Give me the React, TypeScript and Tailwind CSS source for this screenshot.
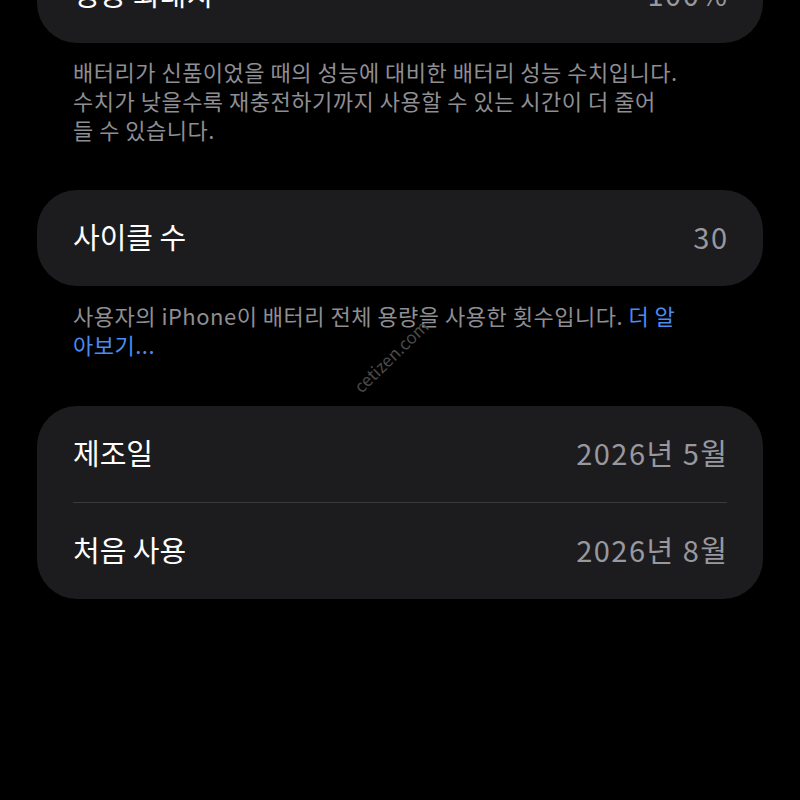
import React from "react";

const font = { fontFamily: '"Noto Sans CJK KR", "Noto Sans", sans-serif' };

function Row({ label, value }: { label: string; value: string }) {
  return (
    <div className="flex h-[96px] items-center justify-between pb-[3px]">
      <span className="text-[29px] text-white">{label}</span>
      <span className="text-[29px] text-[#98989e] tracking-[1.5px] mr-[-1.5px]">{value}</span>
    </div>
  );
}

export default function App() {
  return (
    <div
      className="relative h-[800px] w-[800px] overflow-hidden bg-black [font-family:'Noto_Sans_CJK_KR','Noto_Sans',sans-serif]"
    >
      <div className="px-[37px]">
        <div className="mt-[-53px] rounded-[40px] bg-[#1c1c1e] px-[36px]">
          <Row label="성능 최대치" value="100%" />
        </div>
        <p className="mt-[14px] px-[36px] text-[22px] leading-[29px] text-[#8e8e93] tracking-[0.5px]">
          배터리가 신품이었을 때의 성능에 대비한 배터리 성능 수치입니다.
          <br />
          수치가 낮을수록 재충전하기까지 사용할 수 있는 시간이 더 줄어
          <br />
          들 수 있습니다.
        </p>
        <div className="mt-[46px] rounded-[40px] bg-[#1c1c1e] px-[36px]">
          <Row label="사이클 수" value="30" />
        </div>
        <p className="mt-[15px] px-[36px] text-[22px] leading-[29px] text-[#8e8e93] tracking-[0.5px]">
          사용자의 iPhone이 배터리 전체 용량을 사용한 횟수입니다.{" "}
          <span className="text-[#4a8cf2]">더 알</span>
          <br />
          <span className="text-[#4a8cf2]">아보기...</span>
        </p>
        <div className="mt-[47px] rounded-[40px] bg-[#1c1c1e] px-[36px]">
          <Row label="제조일" value="2026년 5월" />
          <div className="h-px bg-[#3a3a3c]" />
          <Row label="처음 사용" value="2026년 8월" />
        </div>
      </div>
      <div
        className="absolute left-[343px] top-[343px] -rotate-[44deg] text-[17px] text-[#4a4a4a]"
        style={font}
      >
        cetizen.com
      </div>
    </div>
  );
}
